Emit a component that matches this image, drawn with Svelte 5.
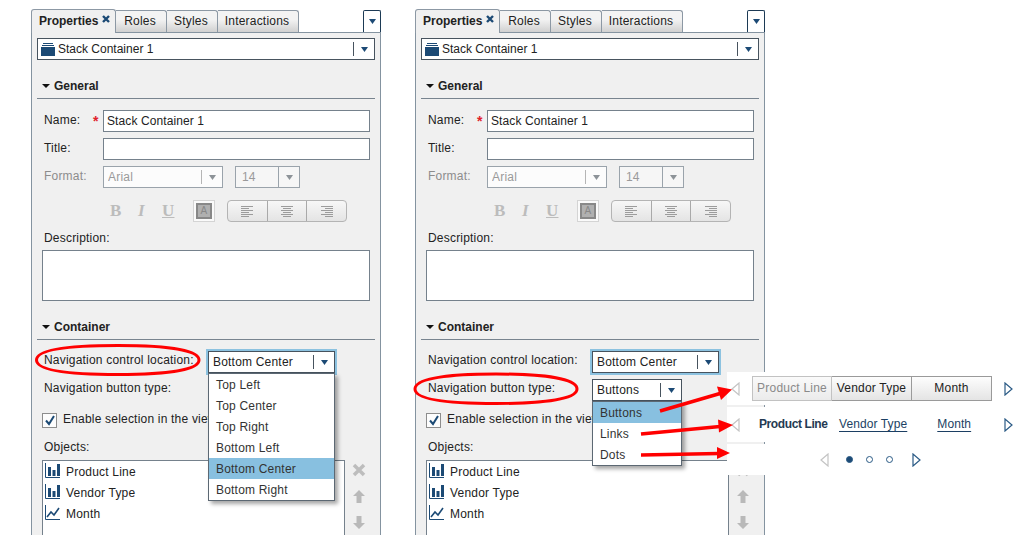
<script lang="ts">
  const locations = ['Top Left', 'Top Center', 'Top Right', 'Bottom Left', 'Bottom Center', 'Bottom Right'];
  const buttonTypes = ['Buttons', 'Links', 'Dots'];
  const tabs = ['Roles', 'Styles', 'Interactions'];
  const objects = [
    { name: 'Product Line', kind: 'bar' },
    { name: 'Vendor Type', kind: 'bar' },
    { name: 'Month', kind: 'line' },
  ];
</script>

{#snippet caret(dim = false)}
  <svg class="caret" class:dim viewBox="0 0 7 5" width="7" height="5"><path d="M0 0h7L3.500 5z" /></svg>
{/snippet}

{#snippet combo(text, cls, dim = false)}
  <div class="combo {cls}" class:dim>
    <span class="combo-text">{text}</span>
    <span class="combo-sep"></span>
    <span class="combo-btn">{@render caret(dim)}</span>
  </div>
{/snippet}

{#snippet menu(items, selected, cls)}
  <ul class="menu {cls}">
    {#each items as item}
      <li class:sel={item === selected}>{item}</li>
    {/each}
  </ul>
{/snippet}

{#snippet alignIcon(mode)}
  <svg viewBox="0 0 12 11" width="12" height="11" class="align">
    {#each [0, 2, 4, 6, 8, 10] as y, i}
      {@const w = i % 2 ? 8 : 12}
      <rect x={mode === 'l' ? 0 : mode === 'c' ? (12 - w) / 2 : 12 - w} y={y} width={w} height="1" />
    {/each}
  </svg>
{/snippet}

{#snippet panel(open)}
  <section class="panel">
    <div class="tabs">
      <div class="tab active">
        Properties
        <svg class="close" viewBox="0 0 8 8" width="8" height="8"><path d="M1 1l6 6M7 1L1 7" /></svg>
      </div>
      {#each tabs as t}
        <div class="tab">{t}</div>
      {/each}
      <div class="tab-menu">{@render caret()}</div>
    </div>

    <div class="body">
      <div class="combo top">
        <svg class="stack" viewBox="0 0 14 13" width="14" height="13">
          <path d="M2 0h10v1H2zM1 2h12v1H1zM0 4h14v9H0z" />
        </svg>
        <span class="combo-text">Stack Container 1</span>
        <span class="combo-sep"></span>
        <span class="combo-btn">{@render caret()}</span>
      </div>

      <h3 class="section first"><span class="tri"></span>General</h3>

      <div class="field">
        <span class="label">Name:<i class="req">*</i></span>
        <div class="input">Stack Container 1</div>
      </div>
      <div class="field">
        <span class="label">Title:</span>
        <div class="input"></div>
      </div>
      <div class="field">
        <span class="label muted">Format:</span>
        {@render combo('Arial', 'font', true)}
        {@render combo('14', 'size', true)}
      </div>

      <div class="toolbar">
        <span class="fmt b">B</span>
        <span class="fmt i">I</span>
        <span class="fmt u">U</span>
        <span class="color"><span class="color-in">A</span></span>
        <div class="aligns">
          <span>{@render alignIcon('l')}</span>
          <span>{@render alignIcon('c')}</span>
          <span>{@render alignIcon('r')}</span>
        </div>
      </div>

      <div class="desc-label">Description:</div>
      <div class="textarea"></div>

      <h3 class="section"><span class="tri"></span>Container</h3>

      <div class="nav-row first">
        <span class="nav-label">Navigation control location:</span>
        <div class="combo-wrap">
          {@render combo('Bottom Center', 'nav-loc focus')}
          {#if open === 'location'}
            {@render menu(locations, 'Bottom Center', 'loc-menu')}
          {/if}
        </div>
      </div>
      <div class="nav-row">
        <span class="nav-label">Navigation button type:</span>
        <!-- in the first panel the open location menu hides this combo -->
        {#if open === 'type'}
          <div class="combo-wrap">
            {@render combo('Buttons', 'nav-type')}
            {@render menu(buttonTypes, 'Buttons', 'type-menu')}
          </div>
        {/if}
      </div>

      <div class="check-row">
        <span class="check">
          <svg viewBox="0 0 12 12" width="12" height="12"><path d="M2 6.500l3 3.500 5-8" /></svg>
        </span>
        <span class="check-text">Enable selection in the view</span>
      </div>

      <div class="objects-label">Objects:</div>
      <div class="objects">
        <div class="list">
          {#each objects as o}
            <div class="obj">
              <svg class="obj-icon" viewBox="0 0 15 15" width="15" height="15">
                <path class="axis" d="M.5 0v14.500H15" />
                {#if o.kind === 'bar'}
                  <path d="M3 4h3v9H3zM7.500 7h3v6h-3zM12 1h3v12h-3z" />
                {:else}
                  <path class="trend" d="M2 12l4-5 3 3 5-7" />
                {/if}
              </svg>
              {o.name}
            </div>
          {/each}
        </div>
        <div class="side">
          <svg viewBox="0 0 14 14" width="14" height="14"><path class="x" d="M2 2l10 10M12 2L2 12" /></svg>
          <svg viewBox="0 0 12 13" width="12" height="13"><path d="M6 0l6 6H8.500v7h-5V6H0z" /></svg>
          <svg viewBox="0 0 12 13" width="12" height="13"><path d="M6 13l6-6H8.500V0h-5v7H0z" /></svg>
        </div>
      </div>
    </div>
  </section>
{/snippet}

{#snippet triLeft()}
  <svg class="nav-tri off" viewBox="0 0 9 14" width="9" height="14"><path d="M8 1v12L1 7z" /></svg>
{/snippet}
{#snippet triRight()}
  <svg class="nav-tri" viewBox="0 0 9 14" width="9" height="14"><path d="M1 1v12l7-6z" /></svg>
{/snippet}

<div class="page">
  {@render panel('location')}
  {@render panel('type')}

  <div class="samples">
    <div class="sample one">
      {@render triLeft()}
      <div class="btns">
        <span class="off">Product Line</span>
        <span>Vendor Type</span>
        <span>Month</span>
      </div>
      {@render triRight()}
    </div>
    <div class="sample two">
      {@render triLeft()}
      <div class="links">
        <b>Product Line</b>
        <a href="#vendor">Vendor Type</a>
        <a href="#month">Month</a>
      </div>
      {@render triRight()}
    </div>
    <div class="sample three">
      {@render triLeft()}
      <div class="dots"><i class="on"></i><i></i><i></i></div>
      {@render triRight()}
    </div>
  </div>

  <svg class="marks" viewBox="0 0 1032 535" width="1032" height="535">
    <path class="ring" d="M36.500 360C36.500 349 72 345.500 118 345.500C168 345.500 199 350 199 360C199 370 168 374.500 118 374.500C72 374.500 36.500 371 36.500 360z" />
    <path class="ring" d="M415 389C415 378 450 374 496 374C546 374 577 379 577 389C577 399 546 403.500 496 403.500C450 403.500 415 400 415 389z" />
    <g class="arrow">
      <path d="M660 411L720 393.500" />
      <path d="M641 434L720 426.500" />
      <path d="M641 455L719 453.500" />
    </g>
    <g class="head">
      <path d="M732 389.500L717 386.500 721 400z" />
      <path d="M733 425L718 419.500 719 432.500z" />
      <path d="M730 453L717 447 717 459z" />
    </g>
  </svg>
</div>

<style>
  :global(body) { background: #fff; }
  .page {
    position: relative;
    width: 1032px;
    height: 535px;
    overflow: hidden;
    display: flex;
    gap: 34px;
    padding: 9px 0 0 31px;
    box-sizing: border-box;
    font: 12px/1.2 "Liberation Sans", Arial, sans-serif;
    letter-spacing: 0.2px;
    color: #222;
  }
  .panel { width: 350px; flex: none; }

  /* tabs */
  .tabs { display: flex; align-items: flex-end; height: 23px; position: relative; z-index: 1; }
  .tab {
    height: 22px;
    box-sizing: border-box;
    padding: 3px 2px 0 0;
    width: 51px;
    text-align: center;
    border: 1px solid #8c98a4;
    border-left: 0;
    border-bottom: 0;
    border-radius: 0 3px 0 0;
    background: linear-gradient(#f3f3f3 40%, #d0d0d0);
  }
  .tab:nth-child(4) { width: 81px; }
  .tab.active {
    width: 85px;
    height: 24px;
    margin-bottom: -1px;
    padding: 4px 0 0 7px;
    text-align: left;
    font-weight: bold;
    letter-spacing: 0;
    border-left: 1px solid #8c98a4;
    border-radius: 3px 3px 0 0;
    background: #f0f0f0;
    position: relative;
  }
  .close { position: absolute; left: 70px; top: 5px; }
  .close path { stroke: #1c4a75; stroke-width: 2.400; fill: none; }
  .tab-menu {
    margin-left: auto;
    width: 18px;
    height: 22px;
    box-sizing: border-box;
    border: 1px solid #1c3a55;
    border-bottom: 0;
    border-radius: 2px 2px 0 0;
    background: #fff;
    display: flex;
    align-items: center;
    justify-content: center;
  }

  .body {
    height: 520px;
    box-sizing: border-box;
    border: 1px solid #8493a0;
    background: #f0f0f0;
    padding: 5px 5px 0;
  }

  /* combos */
  .caret { fill: #1c4a75; display: block; }
  .caret.dim { fill: #8d9398; }
  .combo {
    display: flex;
    align-items: center;
    height: 22px;
    box-sizing: border-box;
    border: 1px solid #47535e;
    background: #fff;
    padding-left: 4px;
  }
  .combo-text { flex: 1; white-space: nowrap; overflow: hidden; }
  .combo-sep { width: 1px; height: 14px; background: #47535e; }
  .combo-btn { width: 20px; display: flex; justify-content: center; }
  .combo.dim { border-color: #9aa3ab; color: #9a9a9a; background: #fcfcfc; }
  .combo.dim .combo-sep { background: #b5b5b5; }
  .combo.top .stack { margin-right: 3px; fill: #1c4a75; flex: none; }
  .combo.top { padding-left: 3px; letter-spacing: 0; }
  .combo.font { width: 120px; }
  .combo.size { width: 65px; margin-left: 12px; background: #f6f6f6; }
  .combo.size .combo-text { padding-left: 2px; }
  .combo.size .combo-sep { height: 20px; background: #9aa3ab; }
  .combo.nav-loc { width: 127px; }
  .combo.nav-type { width: 90px; }
  .combo.focus { outline: 2px solid #8cc2e0; }

  /* sections */
  .section {
    margin: 16px 0 11px;
    height: 23px;
    box-sizing: border-box;
    padding: 3px 0 0 5px;
    border-bottom: 1px solid #78848f;
    font-size: 12px;
    font-weight: bold;
    letter-spacing: 0;
    color: #222;
    display: flex;
    align-items: flex-start;
    line-height: 15px;
  }
  .tri {
    width: 0;
    height: 0;
    margin: 5px 4px 0 0;
    border: 4px solid transparent;
    border-top: 4px solid #111;
    border-bottom: 0;
  }

  /* form rows */
  .field { display: flex; align-items: flex-start; margin: 0 5px 6px 7px; }
  .label { width: 59px; flex: none; position: relative; padding-top: 3px; }
  .label.muted { color: #8c8c8c; }
  .req { position: absolute; left: 49px; top: 3px; color: #e0202a; font-style: normal; font-size: 14px; font-weight: bold; }
  .input {
    flex: 1;
    height: 22px;
    box-sizing: border-box;
    border: 1px solid #75818c;
    background: #fff;
    padding: 3px;
    letter-spacing: 0.1px;
  }

  .toolbar { display: flex; align-items: center; height: 22px; margin: 12px 0 0 73px; }
  .fmt { font: bold 17px "Liberation Serif", serif; color: #bcbcbc; width: 28px; }
  .fmt.i { font-style: italic; width: 24px; }
  .fmt.u { text-decoration: underline; width: 31px; }
  .color {
    width: 22px;
    height: 22px;
    box-sizing: border-box;
    border: 1px solid #d4d4d4;
    background: #fafafa;
    padding: 2px;
  }
  .color-in {
    display: block;
    height: 100%;
    box-sizing: border-box;
    border: 2px solid #888;
    background: #b0b0b0;
    text-align: center;
    font: 10px/12px "Liberation Sans", sans-serif;
    color: #888;
  }
  .aligns {
    display: flex;
    margin-left: 12px;
    width: 120px;
    height: 22px;
    box-sizing: border-box;
    border: 1px solid #b4b4b4;
    border-radius: 4px;
    background: linear-gradient(#f7f7f7, #e4e4e4);
  }
  .aligns span { flex: 1; display: flex; align-items: center; justify-content: center; }
  .aligns span + span { border-left: 1px solid #a9a9a9; }
  .align { fill: #9c9c9c; }

  .desc-label { margin: 9px 0 4px 7px; height: 15px; }
  .textarea {
    margin: 0 5px;
    height: 51px;
    box-sizing: border-box;
    border: 1px solid #75818c;
    background: #fff;
  }

  /* navigation */
  .nav-row { display: flex; align-items: center; height: 22px; margin: 0 0 6px 7px; }
  .nav-label { width: 164px; flex: none; margin-top: -3px; }
  .combo-wrap { position: relative; }
  .menu {
    position: absolute;
    z-index: 2;
    left: 0;
    top: 22px;
    margin: 0;
    padding: 0;
    list-style: none;
    box-sizing: border-box;
    border: 1px solid #5c6873;
    background: #fff;
    box-shadow: 3px 3px 4px rgba(0, 0, 0, 0.35);
    color: #333;
  }
  .menu li { height: 21px; line-height: 22px; padding-left: 7px; }
  .menu li.sel { background: #88c0e0; }
  .loc-menu { width: 127px; }
  .type-menu { width: 90px; }

  .check-row { display: flex; align-items: center; height: 20px; margin: 9px 0 0 5px; }
  .check {
    width: 13px;
    height: 13px;
    margin-right: 6px;
    border: 1px solid #8d8d8d;
    background: #fdfdfd;
    display: flex;
    align-items: center;
    justify-content: center;
  }
  .check path { fill: none; stroke: #1c4a75; stroke-width: 2; }
  .check-text { margin-top: -2px; }
  .objects-label { margin: 9px 0 5px 7px; height: 16px; line-height: 16px; }
  .objects { display: flex; margin-left: 5px; }
  .list {
    width: 303px;
    height: 110px;
    box-sizing: border-box;
    border: 1px solid #75818c;
    background: #fff;
    padding: 1px 2px 0;
    flex: none;
  }
  .obj { display: flex; align-items: center; height: 21px; }
  .obj-icon { margin: -5px 6px 0 0; fill: #1c4a75; }
  .obj-icon .axis { fill: none; stroke: #1c4a75; }
  .obj-icon .trend { fill: none; stroke: #1c4a75; stroke-width: 1.600; }
  .side {
    display: flex;
    flex-direction: column;
    align-items: center;
    gap: 13px;
    width: 28px;
    padding-top: 3px;
    fill: #b9b9b9;
  }
  .side .x { stroke: #bdbdbd; stroke-width: 3.500; fill: none; }

  /* nav samples, pasted over the right panel */
  .samples {
    position: absolute;
    z-index: 3;
    left: 727px;
    top: 372px;
    right: 0;
    display: flex;
    flex-direction: column;
    gap: 2px;
  }
  .sample {
    background: #fff;
    display: flex;
    align-items: center;
    box-sizing: border-box;
  }
  .sample.one { height: 33px; padding-left: 4px; }
  .sample.two { height: 35px; padding-left: 4px; }
  .sample.three { height: 31px; padding-left: 93px; }
  .nav-tri { fill: none; stroke: #2a5a85; stroke-width: 1.200; flex: none; }
  .nav-tri.off { stroke: #c4c4c4; }
  .btns { display: flex; margin: 0 12px; height: 25px; }
  .btns span {
    width: 80px;
    box-sizing: border-box;
    border: 1px solid #9a9a9a;
    border-left: 0;
    text-align: center;
    line-height: 23px;
    background: linear-gradient(#fdfdfd, #e4e4e4);
  }
  .btns span.off {
    border-left: 1px solid #c2c2c2;
    border-color: #c2c2c2;
    color: #8a8a8a;
    background: linear-gradient(#fafafa, #ebebeb);
  }
  .links { width: 240px; margin: 0 12px; display: flex; padding-left: 7px; box-sizing: border-box; }
  .links b { width: 80px; letter-spacing: -0.4px; color: #243a52; }
  .links a { color: #1c3f63; text-decoration: underline; text-underline-offset: 3px; letter-spacing: 0.1px; }
  .links a:last-child { margin-left: 30px; }
  .dots { display: flex; gap: 13px; margin: 0 19px 0 17px; }
  .dots i { width: 5px; height: 5px; border: 1px solid #2a5a85; border-radius: 50%; }
  .dots i.on { background: #1c4a75; }

  .marks { position: absolute; z-index: 4; left: 0; top: 0; pointer-events: none; }
  .ring { fill: none; stroke: #f00; stroke-width: 3; }
  .arrow path { stroke: #f00; stroke-width: 3.500; fill: none; }
  .head path { fill: #f00; }
</style>
